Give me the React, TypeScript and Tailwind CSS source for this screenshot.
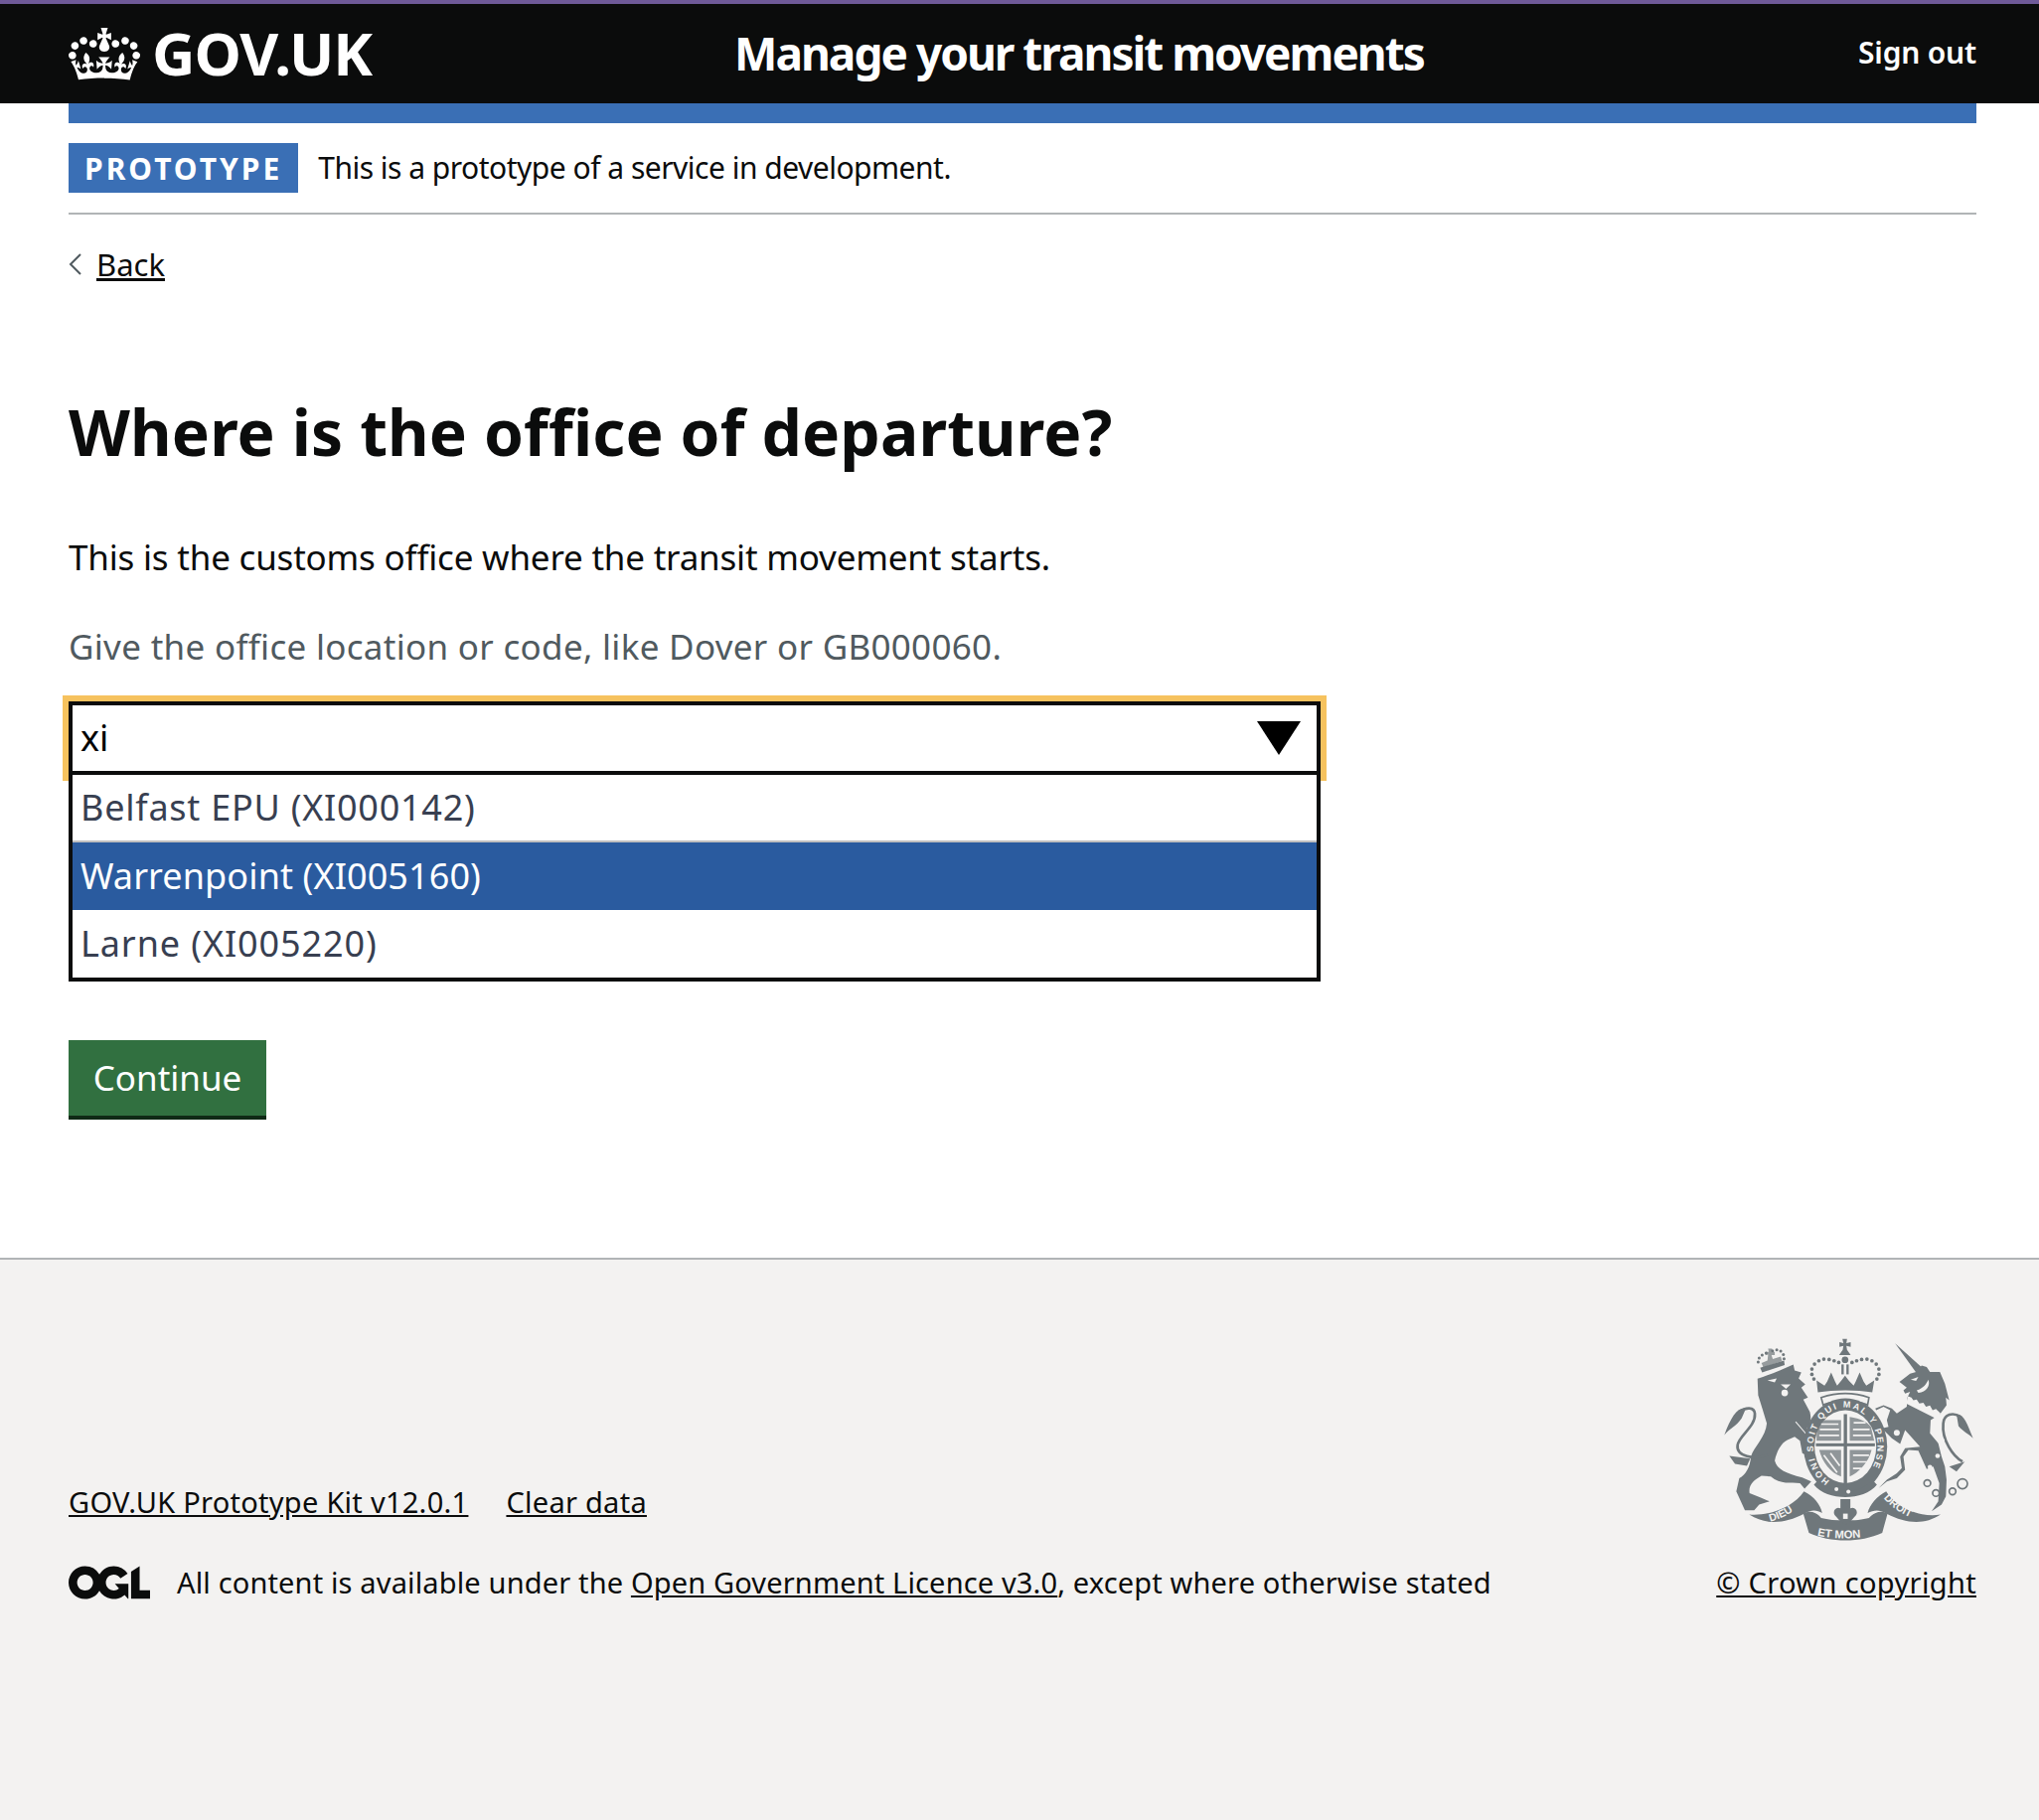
const options = [
  { label: "Belfast EPU (XI000142)", active: false, spacing: "tracking-[0.75px]" },
  { label: "Warrenpoint (XI005160)", active: true, spacing: "tracking-[0.1px]" },
  { label: "Larne (XI005220)", active: false, spacing: "tracking-[0.9px]" },
];

function CrownLogo() {
  return (
    <svg viewBox="0 0 132 97" className="w-[72px] h-[53px] fill-white shrink-0">
      <path d="M25 30.2c3.5 1.5 7.7-.2 9.1-3.7 1.5-3.6-.2-7.8-3.9-9.2-3.6-1.4-7.6.3-9.1 3.9-1.4 3.5.3 7.5 3.9 9zM9 39.5c3.6 1.5 7.8-.2 9.2-3.7 1.5-3.6-.2-7.8-3.9-9.1-3.6-1.5-7.6.2-9.1 3.8-1.4 3.5.3 7.5 3.8 9zM4.4 57.2c3.5 1.5 7.7-.2 9.1-3.8 1.5-3.6-.2-7.7-3.9-9.1-3.5-1.5-7.6.3-9.1 3.8-1.4 3.5.3 7.6 3.9 9.1zm38.3-21.4c3.5 1.5 7.7-.2 9.1-3.8 1.5-3.6-.2-7.7-3.9-9.1-3.6-1.5-7.6.3-9.1 3.8-1.3 3.6.4 7.7 3.9 9.1zm64.4-5.6c-3.6 1.5-7.8-.2-9.1-3.7-1.5-3.6.2-7.8 3.8-9.2 3.6-1.4 7.7.3 9.2 3.9 1.3 3.5-.4 7.5-3.9 9zm15.9 9.3c-3.6 1.5-7.7-.2-9.1-3.7-1.5-3.6.2-7.8 3.7-9.1 3.6-1.5 7.7.2 9.2 3.8 1.5 3.5-.3 7.5-3.8 9zm4.7 17.7c-3.6 1.5-7.8-.2-9.2-3.8-1.5-3.6.2-7.7 3.9-9.1 3.6-1.5 7.7.3 9.2 3.8 1.3 3.5-.4 7.6-3.9 9.1zM89.3 35.8c-3.6 1.5-7.8-.2-9.2-3.8-1.4-3.6.2-7.7 3.9-9.1 3.6-1.5 7.7.3 9.2 3.8 1.4 3.6-.3 7.7-3.9 9.1z" />
      <path d="M69.7 17.7l8.9 4.7V9.3l-8.9 2.8c-.2-.3-.5-.6-.9-.9L72.4 0H59.6l3.6 11.2c-.3.3-.6.5-.9.9l-8.8-2.8v13.1l8.8-4.7c.3.3.6.7.9.9L57 33c-1.8 5 1.5 11 9 11s10.800-6 9-11l-6.200-14.400c.3-.2.6-.6.900-.900z" />
      <path d="M66 92.800c16.900 0 32.800 1.100 47.100 3.200 4-16.900 8.900-26.700 14-33.500l-9.600-3.400c1 4.900 1.100 7.200 0 10.300-1.500-1.400-3-4.300-4.200-8.700L108.600 76c2.800-2 5-3.200 7.500-3.300-4.400 9.400-10 11.900-13.600 11.200-4.300-.8-6.300-4.600-5.600-7.900 1-4.700 5.700-5.900 8-.5 4.300-8.700-3-11.400-7.600-8.800 7.100-7.200 7.900-13.500 2.100-21.100-8 6.100-8.100 12.300-4.500 20.800-4.700-5.400-12.100-2.500-9.500 6.200 3.400-5.200 7.900-2 7.200 3.100-.6 4.300-6.400 7.800-13.500 7.200-10.300-.9-10.900-8-11.200-13.800 2.500-.5 7.100 1.800 11 7.300L80.200 60c-4.100 4.400-8 5.300-12.300 5.400 1.400-4.400 8-11.600 8-11.600H55.500s6.400 7.200 7.900 11.600c-4.200-.1-8-1-12.300-5.400l1.400 16.400c3.900-5.500 8.500-7.700 10.900-7.300-.3 5.800-.9 12.800-11.100 13.800-7.200.6-12.900-2.900-13.500-7.200-.7-5 3.800-8.300 7.100-3.100 2.700-8.700-4.600-11.600-9.400-6.200 3.700-8.500 3.600-14.700-4.600-20.800-5.800 7.600-5 13.900 2.200 21.100-4.700-2.600-11.900.1-7.700 8.800 2.300-5.500 7.100-4.200 8.100.5.7 3.300-1.300 7.100-5.700 7.900-3.500.7-9-1.800-13.500-11.200 2.500.1 4.700 1.300 7.500 3.300l-4.700-15.400c-1.200 4.400-2.700 7.200-4.300 8.700-1.100-3.100-.9-5.400 0-10.300l-9.500 3.400c5 6.900 9.900 16.700 14 33.500 14.800-2.100 30.800-3.200 47.700-3.200z" />
    </svg>
  );
}

function OglLogo() {
  return (
    <svg viewBox="0 0 483.200 195.700" className="w-[82px] h-[34px] fill-[#0b0c0c] shrink-0">
      <path d="M421.500 142.800V.1l-50.700 32.300v161.100h112.400v-50.700zm-122.300-9.600A47.120 47.120 0 0 1 221 97.800c0-26 21.100-47.100 47.100-47.100 16.700 0 31.400 8.700 39.700 21.800l42.700-27.200A97.630 97.630 0 0 0 268.100 0c-36.500 0-68.300 20.100-85.100 49.700A98 98 0 0 0 97.800 0C43.900 0 0 43.900 0 97.800s43.900 97.800 97.800 97.800c36.500 0 68.300-20.100 85.100-49.700a97.760 97.760 0 0 0 149.600 25.400l19.400 22.200h3v-87.800h-80l24.300 27.500zM97.800 145c-26 0-47.100-21.100-47.100-47.100s21.100-47.100 47.100-47.100 47.200 21 47.200 47S123.800 145 97.800 145" />
    </svg>
  );
}

// coordinates follow a 3x crop of the crest
function Crest() {
  const crownDots = [
    [424, 192], [424, 176], [432, 161], [445, 151], [460, 146], [476, 147], [491, 151], [505, 156],
    [545, 156], [559, 151], [574, 147], [590, 146], [605, 151], [618, 161], [626, 176], [626, 192], [620, 206], [430, 206],
  ];
  const lionCrownDots = [
    [262, 155], [265, 143], [274, 134], [286, 128], [305, 121], [318, 118], [330, 122], [338, 132], [340, 145],
  ];
  const text = "fill-[#f3f2f1] font-['Liberation_Sans',sans-serif] font-bold";
  return (
    <svg viewBox="150 80 770 620" className="w-[257px] h-[207px] fill-[#6f777b] shrink-0">
      {/* lion */}
      <path d="M260 205 C290 195 330 180 368 162 L372 180 L392 186 L384 204 L404 222 L392 232 L412 262 L398 268 L418 305 C424 330 418 345 408 355 L432 425 L418 442 L395 430 L388 392 L372 380 L350 390 C330 400 318 425 312 452 C318 478 345 490 395 503 L422 515 L402 537 L388 520 C360 518 330 525 300 500 L272 498 C250 510 232 525 236 550 L268 563 L296 575 L265 585 L250 602 L222 602 L196 545 L205 505 C225 495 238 470 240 440 C250 410 285 380 288 340 L276 300 L262 255 Z" strokeLinejoin="round" />
      <path d="M290 435 C250 450 195 440 200 405 C205 375 255 350 252 310 C250 290 225 290 205 305" fill="none" stroke="#6f777b" strokeWidth="8" />
      <path d="M225 295 C200 290 180 320 160 375 C175 355 195 350 212 325 Z" />
      <path d="M175 438 L238 446 L228 468 L192 462 Z" />
      <path d="M268 172 L340 150 L342 164 L274 186 Z" />
      <path d="M272 158 L290 150 L292 132 L284 134 L284 124 L294 124 L292 114 L304 114 L302 124 L312 124 L312 134 L302 134 L306 146 L330 138 L334 152 L278 172 Z" fillOpacity="0.7" />
      {lionCrownDots.map(([cx, cy], i) => (
        <circle key={i} cx={cx} cy={cy} r="4.500" />
      ))}
      <path d="M290 210 L318 204 L312 216 Z" fill="#f3f2f1" />
      <path d="M330 222 L360 222 L346 236 Z" fill="#f3f2f1" />
      <circle cx="342" cy="248" r="10" fill="#f3f2f1" />
      <path d="M375 335 L412 378" stroke="#f3f2f1" strokeWidth="3" />
      {/* unicorn */}
      <path d="M675 99 L754 170 L738 186 Z" />
      <path d="M688 215 L720 190 L738 185 L755 165 L770 170 L780 185 L810 185 L825 220 L838 270 L828 262 L830 285 L810 312 L782 330 L780 370 L805 400 L815 440 L825 470 L830 510 L828 560 L815 585 L785 605 L805 575 L808 520 L790 470 L770 478 L745 422 L715 420 L700 440 L705 480 L680 505 L650 515 L625 535 L650 510 L680 490 L695 475 L690 440 L705 415 L750 410 L705 360 L690 402 L665 385 L635 355 L655 350 L650 330 L660 300 L640 290 L618 300 L615 295 L640 285 L665 295 L680 310 L710 290 L712 262 L720 245 L705 250 L700 240 L710 232 Z" strokeLinejoin="round" />
      <path d="M714 258 L724 262 L730 270 L740 268 L748 280 L760 278 L768 290 L780 286 L788 300 L798 296 L812 310 L803 328 L708 280 Z" fill="#f3f2f1" />
      <path d="M740 240 C760 235 770 220 775 208 C782 225 770 245 745 248 Z" fill="#f3f2f1" />
      <path d="M722 208 L745 200 L738 212 Z" fill="#f3f2f1" />
      <path d="M878 455 C850 440 815 390 820 340 C822 312 850 305 870 320" fill="none" stroke="#6f777b" strokeWidth="8" />
      <path d="M860 312 C882 310 892 340 910 385 C895 370 880 365 866 348 Z" />
      <path d="M838 470 L885 455 L860 485 Z" />
      <circle cx="690" cy="284" r="9" fill="#f3f2f1" />
      <circle cx="680" cy="368" r="9" fill="#f3f2f1" />
      <circle cx="814" cy="393" r="10" fill="#f3f2f1" />
      <circle cx="803" cy="438" r="7" fill="#f3f2f1" />
      <circle cx="780" cy="472" r="7" fill="#f3f2f1" />
      {[[772, 520, 10], [798, 550, 10], [848, 545, 10], [878, 522, 15]].map(([cx, cy, r], i) => (
        <circle key={i} cx={cx} cy={cy} r={r} fill="none" stroke="#6f777b" strokeWidth="5" />
      ))}
      {/* royal crown */}
      <path d="M516 85 L530 85 L528 98 L541 95 L541 109 L528 106 L530 118 L541 134 L506 134 L517 118 L519 106 L507 109 L507 95 L519 98 Z" />
      <circle cx="524" cy="148" r="10" />
      {crownDots.map(([cx, cy], i) => (
        <circle key={i} cx={cx} cy={cy} r="5.500" />
      ))}
      <rect x="513" y="162" width="7" height="30" />
      <rect x="528" y="162" width="7" height="30" />
      <path d="M442 246 L438 210 L462 226 L470 214 L482 186 L494 214 L500 226 L512 212 L524 196 L536 212 L550 226 L556 214 L568 186 L580 214 L588 226 L612 210 L606 246 C560 238 490 238 442 246 Z" />
      <path d="M452 262 C500 246 550 246 596 262 L592 284 C550 268 500 268 458 284 Z" fill="none" stroke="#6f777b" strokeWidth="5" />
      {/* garter and shield */}
      <ellipse cx="525" cy="410" rx="126" ry="146" />
      <ellipse cx="525" cy="410" rx="93" ry="110" fill="#f3f2f1" />
      <rect x="520" y="312" width="10" height="218" />
      <rect x="436" y="400" width="178" height="9" />
      <path d="M445 330 H512 V392 H438 C438 370 440 350 445 330 Z M538 320 C570 325 590 335 602 350 L612 392 H538 Z M446 420 H512 V500 C480 490 455 455 446 420 Z M538 420 H604 C596 455 565 490 538 500 Z" fillOpacity="0.75" />
      <path d="M452 342 H504 M448 358 H506 M446 376 H506 M550 338 H586 M548 358 H598 M548 376 H602 M460 436 L500 488 M480 430 L508 468 M548 436 H596 M548 456 H590 M548 476 H574" stroke="#f3f2f1" strokeWidth="5" />
      <path d="M444 510 C480 556 570 556 606 510 L620 525 C580 575 470 575 430 525 Z" />
      <circle cx="498" cy="538" r="6" fill="#f3f2f1" />
      <circle cx="534" cy="546" r="6" fill="#f3f2f1" />
      <path id="garter" d="M478 513 A97 118 0 1 1 592 495" fill="none" />
      <text className={text} fontSize="27">
        <textPath href="#garter" textLength="520">HONI SOIT QUI MAL Y PENSE</textPath>
      </text>
      {/* motto */}
      <path d="M235 615 C300 620 370 590 400 545 C430 560 450 585 455 610 C440 600 420 600 405 610 C350 640 290 650 235 615 Z" />
      <path d="M398 612 C420 600 440 610 452 625 C490 635 560 635 596 625 C610 610 630 600 652 612 L636 670 C570 700 480 700 415 670 Z" />
      <path d="M812 615 C750 625 680 595 648 545 C620 560 598 585 592 610 C610 600 630 600 645 610 C700 640 760 650 812 615 Z" />
      <path id="motto-left" d="M298 636 C340 625 375 605 398 575" fill="none" />
      <path id="motto-mid" d="M440 678 C490 690 560 690 612 676" fill="none" />
      <path id="motto-right" d="M640 565 C670 600 710 625 765 638" fill="none" />
      <text className={text} fontSize="32">
        <textPath href="#motto-left">DIEU</textPath>
      </text>
      <text className={text} fontSize="34">
        <textPath href="#motto-mid">ET MON</textPath>
      </text>
      <text className={text} fontSize="32">
        <textPath href="#motto-right">DROIT</textPath>
      </text>
      {/* fleur-de-lis */}
      <path d="M510 568 H540 V596 C556 588 568 610 552 622 C545 632 535 640 525 645 C515 640 505 632 498 622 C482 610 494 588 510 596 Z" />
      <path d="M518 612 H532 V628 H518 Z" fill="#f3f2f1" />
    </svg>
  );
}

export default function App() {
  return (
    <div className="flex flex-col min-h-[1832px] bg-white text-[#0b0c0c] font-['Noto_Sans',sans-serif]">
      {/* header */}
      <header className="flex items-center h-[104px] border-t-4 border-[#6f5a98] bg-[#0b0c0c] pl-[69px] pr-[63px] text-white">
        <div className="flex items-center w-[670px]">
          <CrownLogo />
          <span className="ml-[12px] -mt-[3px] text-[60px] leading-none font-bold tracking-[-1px]">GOV.UK</span>
        </div>
        <span className="-mt-[2px] text-[46px] leading-none font-bold tracking-[-2px]">Manage your transit movements</span>
        <a className="ml-auto -mt-[2px] text-[30px] leading-none font-semibold tracking-[-0.2px]">Sign out</a>
      </header>

      <main className="pl-[69px] pr-[63px] flex-1">
        <div className="h-5 bg-[#3a6fb5]" />
        {/* phase banner */}
        <div className="flex items-center gap-5 pt-5 pb-5 border-b-2 border-[#b1b4b6]">
          <strong className="flex items-center h-[50px] px-[16px] bg-[#3a6fb5] text-white text-[30px] font-bold tracking-[3px]">PROTOTYPE</strong>
          <span className="text-[30px] leading-none tracking-[-0.5px]">This is a prototype of a service in development.</span>
        </div>

        <a className="flex items-center mt-[30px] text-[31px] leading-10">
          <svg viewBox="0 0 14 24" className="w-[14px] h-6 stroke-[#505a5f] fill-none mr-[14px]">
            <path d="M12 2 L2 12 L12 22" strokeWidth="2" />
          </svg>
          <span className="underline">Back</span>
        </a>

        <h1 className="mt-[109px] text-[64px] leading-[80px] font-bold tracking-[0.15px]">Where is the office of departure?</h1>
        <p className="mt-[61px] text-[35px] leading-[50px] tracking-[-0.2px]">This is the customs office where the transit movement starts.</p>
        <p className="mt-[40px] text-[35px] leading-[50px] text-[#505a5f] tracking-[0.3px]">Give the office location or code, like Dover or GB000060.</p>

        {/* autocomplete */}
        <div className="relative mt-[30px] w-[1260px]">
          <div className="absolute -left-[6px] -right-[6px] -top-[6px] h-[86px] bg-[#f6c25e]" />
          <div className="relative flex items-center justify-between h-[74px] border-4 border-[#0b0c0c] bg-white pl-2 pr-[16px]">
            <span className="text-[36px] text-black">xi</span>
            <svg viewBox="0 0 44 34" className="w-[44px] h-[34px] fill-black">
              <path d="M0 0 H44 L22 34 Z" />
            </svg>
          </div>
          <ul className="relative border-4 border-t-0 border-[#0b0c0c] bg-white">
            {options.map((o, i) => (
              <li
                key={o.label}
                className={`flex items-center h-[68px] pl-[8px] text-[36px] ${o.spacing} ${
                  o.active ? "bg-[#2a5b9f] text-white" : "text-[#383f51]"
                } ${i === 0 ? "border-b-2 border-[#c0c0c0]" : ""}`}
              >
                {o.label}
              </li>
            ))}
          </ul>
        </div>

        <button className="block mt-[59px] h-[80px] w-[199px] bg-[#317040] border-b-4 border-[#0f2a16] text-white text-[35px]">Continue</button>
      </main>

      {/* footer */}
      <footer className="h-[566px] bg-[#f3f2f1] border-t-2 border-[#b1b4b6] pl-[69px] pr-[63px] pt-[78px]">
        <div className="flex items-end justify-between">
          <div>
            <div className="flex gap-[38px] text-[29px] leading-9 tracking-[0.27px]">
              <a className="underline">GOV.UK Prototype Kit v12.0.1</a>
              <a className="underline">Clear data</a>
            </div>
            <div className="flex items-center mt-[45px]">
              <OglLogo />
              <span className="ml-[27px] text-[29px] leading-9 tracking-[0.15px]">
                All content is available under the <a className="underline">Open Government Licence v3.0</a>, except where otherwise stated
              </span>
            </div>
          </div>
          <div className="flex flex-col items-end">
            <Crest />
            <a className="mt-[22px] underline text-[29px] leading-9 tracking-[0.35px]">© Crown copyright</a>
          </div>
        </div>
      </footer>
    </div>
  );
}
